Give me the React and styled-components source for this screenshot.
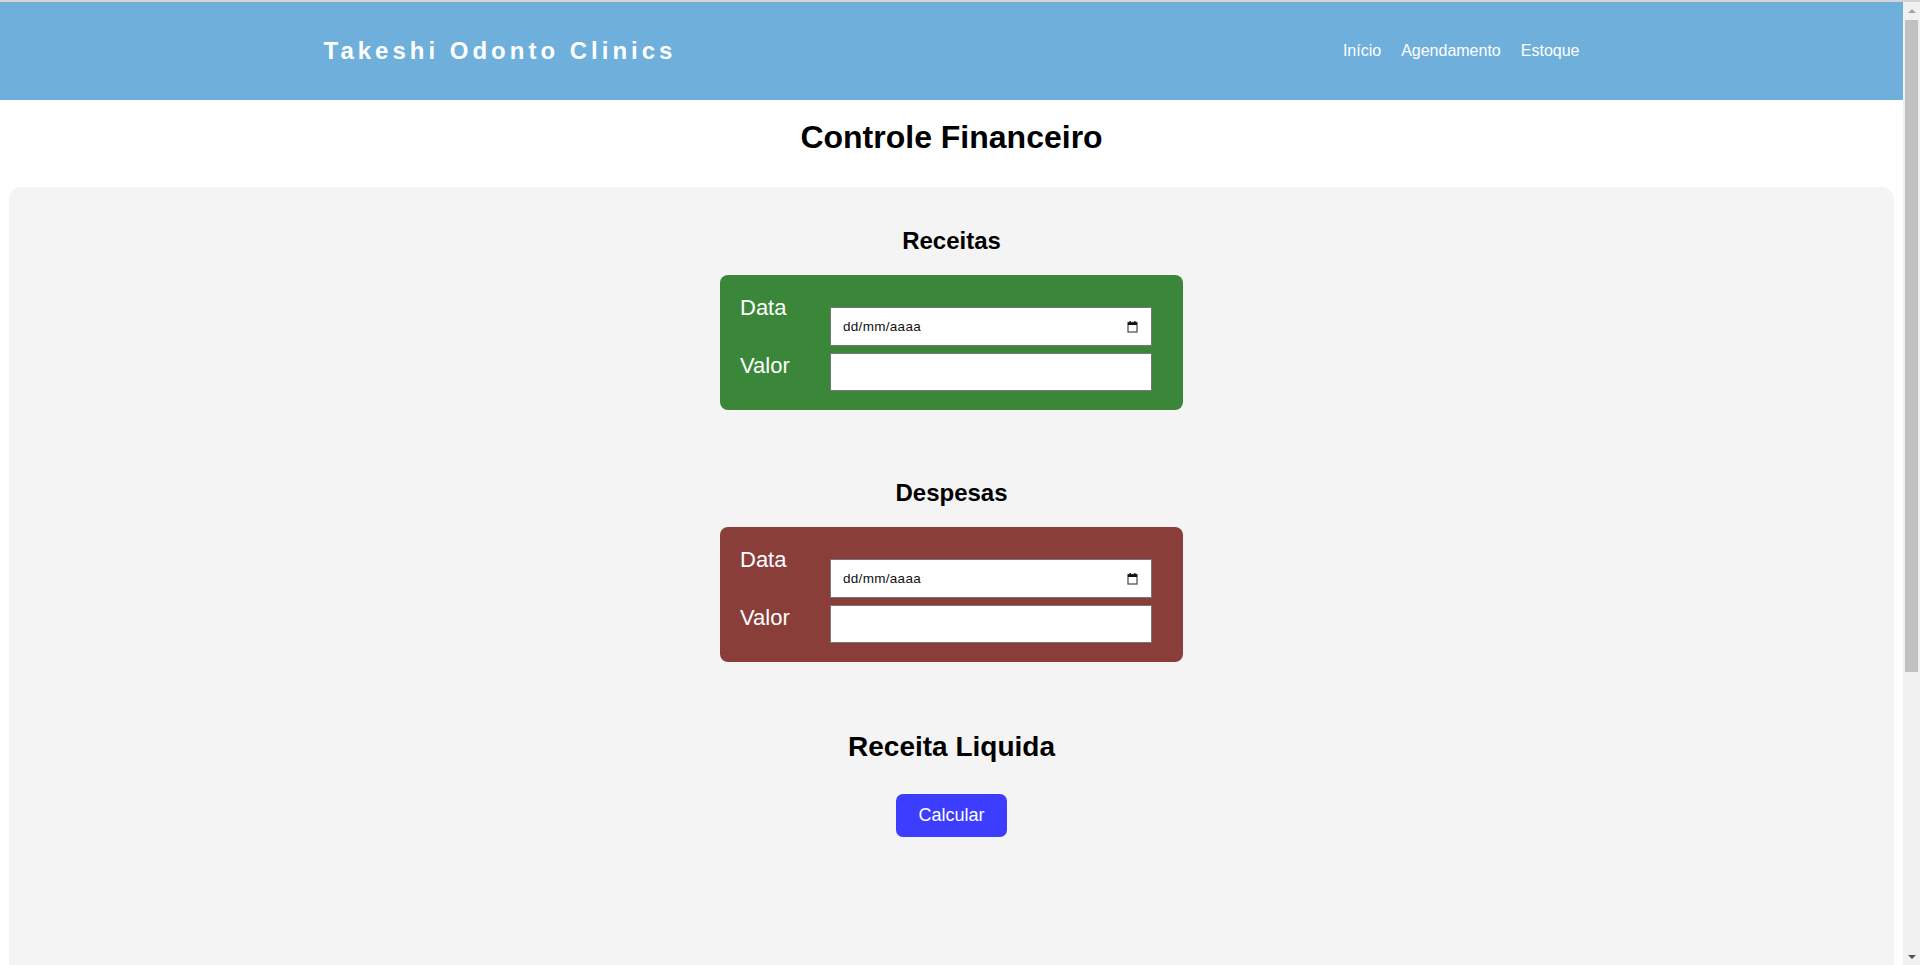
import React from 'react';
import styled, { createGlobalStyle } from 'styled-components';

// --- Global ---

const GlobalStyle = createGlobalStyle`
  html {
    border-top: 2px solid #d4d4d4;
  }
  body {
    margin: 0;
    background: #ffffff;
    font-family: 'Liberation Sans', Arial, sans-serif;
    color: #000;
  }
`;

// --- Page frame (content + window scrollbar) ---

const Page = styled.div`
  margin-right: 17px;
`;

const ScrollTrack = styled.div`
  position: fixed;
  top: 2px;
  right: 0;
  bottom: 0;
  width: 17px;
  background: #f1f1f1;
  display: flex;
  flex-direction: column;
  align-items: center;
`;

const ScrollArrow = styled.div`
  height: 17px;
  display: flex;
  align-items: center;
  justify-content: center;
  flex-shrink: 0;
`;

const ScrollThumb = styled.div`
  width: 13px;
  height: 652px;
  margin-top: 1px;
  background: #c1c1c1;
`;

const ScrollSpacer = styled.div`
  flex: 1;
`;

// --- Header ---

const Header = styled.header`
  display: flex;
  align-items: center;
  height: 98px;
  background-color: #6fafdc;
`;

const HeaderInner = styled.div`
  width: 66%;
  margin: 0 auto;
  display: flex;
  align-items: center;
  justify-content: space-between;
`;

const Brand = styled.div`
  font-size: 24px;
  font-weight: bold;
  letter-spacing: 4px;
  color: #ffffff;
`;

const Nav = styled.nav`
  display: flex;
  gap: 20px;
`;

const NavLink = styled.a`
  font-size: 16px;
  color: #ffffff;
  text-decoration: none;
`;

// --- Page ---

const PageTitle = styled.h1`
  margin: 19px 0 31px;
  font-size: 32px;
  text-align: center;
`;

const Panel = styled.main`
  margin: 0 9px;
  padding: 20px;
  min-height: 1150px;
  background-color: #f4f4f4;
  border-radius: 12px;
  display: flex;
  flex-direction: column;
  align-items: center;
`;

const Section = styled.section`
  display: flex;
  flex-direction: column;
  align-items: center;
  margin-bottom: 49px;
`;

const SectionTitle = styled.h2`
  margin: 20px 0;
  font-size: ${(p) => (p.$big ? '28px' : '24px')};
  line-height: normal;
`;

const Card = styled.div`
  box-sizing: border-box;
  width: 463px;
  padding: 20px 31px 19px 20px;
  display: grid;
  grid-template-columns: 90px 322px;
  row-gap: 7px;
  align-items: start;
  border-radius: 8px;
  background-color: ${(p) => p.$color};
  color: #ffffff;
`;

const Label = styled.label`
  font-size: 22px;
  line-height: 25px;
`;

const DateBox = styled.div`
  box-sizing: border-box;
  height: 39px;
  margin-top: 12px;
  padding: 0 13px 0 12px;
  display: flex;
  align-items: center;
  justify-content: space-between;
  background: #ffffff;
  border: 1px solid #767676;
`;

const DateField = styled.input`
  flex: 1;
  min-width: 0;
  border: none;
  outline: none;
  padding: 0;
  background: transparent;
  font-family: 'Liberation Sans', Arial, sans-serif;
  font-size: 13.5px;
  letter-spacing: 0.3px;
  color: #000;

  &::placeholder {
    color: #111;
    opacity: 1;
  }
`;

const TextField = styled.input`
  box-sizing: border-box;
  width: 100%;
  height: 38px;
  padding: 0 10px;
  border: 1px solid #767676;
  background: #ffffff;
  font-size: 16px;
  outline: none;
`;

const Button = styled.button`
  margin-top: 11px;
  padding: 11px 22px;
  border: none;
  border-radius: 7px;
  background-color: #3d3dff;
  color: #ffffff;
  font-family: 'Liberation Sans', Arial, sans-serif;
  font-size: 18px;
  cursor: pointer;
`;

// --- Components ---

const CalendarIcon = () => (
  <svg width="11" height="12" viewBox="0 0 11 12" aria-hidden="true">
    <rect x="1" y="1.5" width="9" height="9.5" fill="none" stroke="#555" strokeWidth="1.3" />
    <rect x="1" y="1.5" width="9" height="2.5" fill="#111" />
    <rect x="2.5" y="0" width="1.3" height="2" fill="#111" />
    <rect x="7.2" y="0" width="1.3" height="2" fill="#111" />
  </svg>
);

const Arrow = ({ up, color }) => (
  <svg width="8" height="4" viewBox="0 0 8 4" aria-hidden="true">
    <polygon points={up ? '4,0 8,4 0,4' : '0,0 8,0 4,4'} fill={color} />
  </svg>
);

const EntryCard = ({ color, id }) => (
  <Card $color={color}>
    <Label htmlFor={`${id}-data`}>Data</Label>
    <DateBox>
      <DateField id={`${id}-data`} type="text" placeholder="dd/mm/aaaa" />
      <CalendarIcon />
    </DateBox>
    <Label htmlFor={`${id}-valor`}>Valor</Label>
    <TextField id={`${id}-valor`} type="number" />
  </Card>
);

export default function App() {
  return (
    <>
      <GlobalStyle />
      <Page>
        <Header>
          <HeaderInner>
            <Brand>Takeshi Odonto Clinics</Brand>
            <Nav>
              <NavLink href="#">Início</NavLink>
              <NavLink href="#">Agendamento</NavLink>
              <NavLink href="#">Estoque</NavLink>
            </Nav>
          </HeaderInner>
        </Header>
        <PageTitle>Controle Financeiro</PageTitle>
        <Panel>
          <Section>
            <SectionTitle>Receitas</SectionTitle>
            <EntryCard id="receita" color="#3a873a" />
          </Section>
          <Section>
            <SectionTitle>Despesas</SectionTitle>
            <EntryCard id="despesa" color="#893e3a" />
          </Section>
          <SectionTitle $big>Receita Liquida</SectionTitle>
          <Button>Calcular</Button>
        </Panel>
      </Page>
      <ScrollTrack aria-hidden="true">
        <ScrollArrow>
          <Arrow up color="#a3a3a3" />
        </ScrollArrow>
        <ScrollThumb />
        <ScrollSpacer />
        <ScrollArrow>
          <Arrow color="#505050" />
        </ScrollArrow>
      </ScrollTrack>
    </>
  );
}
